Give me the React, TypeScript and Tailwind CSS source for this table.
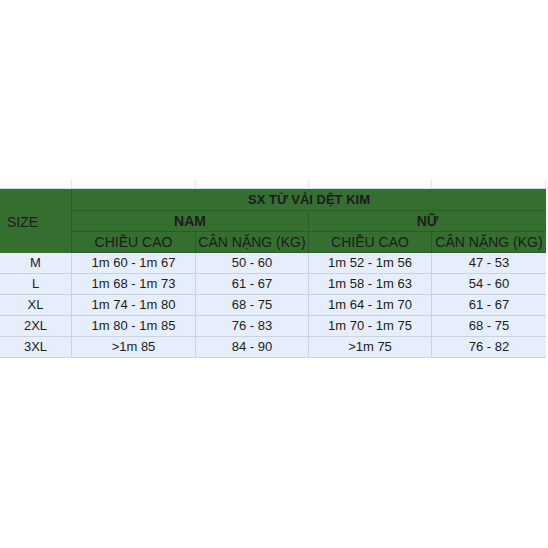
import React from "react";

const rows = [
  ["M", "1m 60 - 1m 67", "50 - 60", "1m 52 - 1m 56", "47 - 53"],
  ["L", "1m 68 - 1m 73", "61 - 67", "1m 58 - 1m 63", "54 - 60"],
  ["XL", "1m 74 - 1m 80", "68 - 75", "1m 64 - 1m 70", "61 - 67"],
  ["2XL", "1m 80 - 1m 85", "76 - 83", "1m 70 - 1m 75", "68 - 75"],
  ["3XL", ">1m 85", "84 - 90", ">1m 75", "76 - 82"],
];

export default function App() {
  const g = "bg-[#356f30] border-[#2b5d27]";
  return (
    <div
      className="w-[548px] h-[548px] bg-white pt-[180px] text-[13px] text-[#1c1c1c]"
      style={{ fontFamily: '"Liberation Sans", Arial, sans-serif' }}
    >
      {/* strip above */}
      <div className="grid grid-cols-[72px_124px_113px_123px_114px_2px] h-[9px] border-b border-[#d6dce6]">
        <div className="border-r border-[#e1e5ec]" />
        <div className="border-r border-[#e1e5ec]" />
        <div className="border-r border-[#e1e5ec]" />
        <div className="border-r border-[#e1e5ec]" />
        <div className="border-r border-[#e1e5ec]" />
        <div />
      </div>
      <div className="grid grid-cols-[72px_124px_113px_123px_114px] grid-rows-[22px_21px_21px] w-[546px] border-r border-[#d6dce6]">
        <div className={`row-span-3 border-r ${g} flex items-center pl-[7px] pt-[2px] text-[14px]`}>SIZE</div>
        <div className={`col-span-4 border-b ${g} flex items-center justify-center font-bold text-[13px]`}>SX TỪ VẢI DỆT KIM</div>
        <div className={`col-span-2 border-b border-r ${g} flex items-center justify-center font-bold text-[14px]`}>NAM</div>
        <div className={`col-span-2 border-b ${g} flex items-center justify-center font-bold text-[14px]`}>NỮ</div>
        <div className={`border-b border-r ${g} flex items-center justify-center text-[14px]`}>CHIỀU CAO</div>
        <div className={`border-b border-r ${g} flex items-center justify-center text-[14px]`}>CÂN NẶNG (KG)</div>
        <div className={`border-b border-r ${g} flex items-center justify-center text-[14px]`}>CHIỀU CAO</div>
        <div className={`border-b ${g} flex items-center justify-center text-[14px]`}>CÂN NẶNG (KG)</div>
      </div>
      <div className="grid grid-cols-[72px_124px_113px_123px_114px] auto-rows-[21px] w-[546px] border-r border-[#d6dce6]">
        {rows.map((r, i) =>
          r.map((c, j) => (
            <div
              key={`${i}-${j}`}
              className={`bg-[#e6eefb] border-b border-[#c9d3e2] ${j < 4 ? "border-r" : ""} flex items-center justify-center`}
            >
              {c}
            </div>
          ))
        )}
      </div>
    </div>
  );
}
